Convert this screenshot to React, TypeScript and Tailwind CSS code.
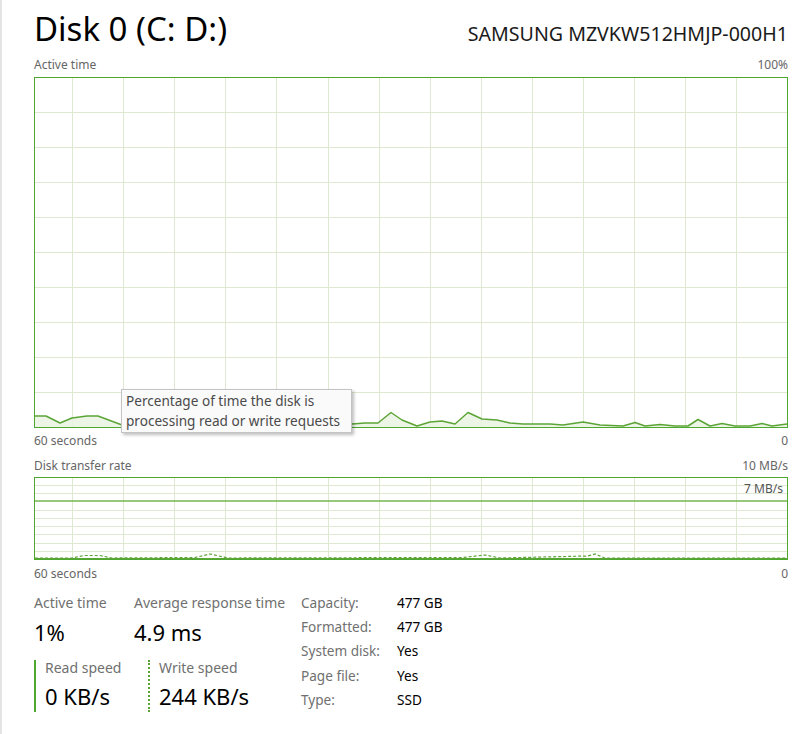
const GRID = '#dfe8d0';
const LINE = '#5ba537';

const vLines = Array.from({ length: 14 }, (_, k) => Math.round(37 + 51.1 * k) + 0.5);

const activePts: [number, number][] = [
  [35, 416], [46, 416], [60, 423], [72, 418], [87, 416], [98, 416], [122, 425], [140, 426],
  [160, 424], [180, 425], [200, 425], [220, 424], [240, 425], [260, 424], [280, 425], [300, 425],
  [320, 424], [340, 425], [352, 424], [365, 423], [378, 423], [391, 412.5], [402, 420], [417, 426],
  [430, 422], [442, 421], [455, 424], [468, 412.5], [482, 419], [497, 420], [510, 423], [523, 424],
  [550, 424], [563, 425], [583, 422], [600, 425], [623, 426], [635, 422.5], [645, 426], [660, 424.5],
  [675, 426], [688, 426], [698, 419.5], [710, 426], [722, 423.5], [735, 426], [750, 426], [762, 423.5],
  [772, 426], [787, 424],
];

const writePts: [number, number][] = [
  [35, 558], [72, 558], [84, 555.5], [100, 555.5], [112, 558], [195, 557.5], [210, 554], [228, 558],
  [463, 557.5], [485, 555], [500, 558], [588, 556], [595, 554], [605, 558], [787, 558],
];

function toPath(pts: [number, number][], ox: number, oy: number) {
  return pts.map(([x, y], i) => `${i ? 'L' : 'M'}${x - ox} ${y - oy}`).join(' ');
}

function ActiveChart() {
  const h = 349;
  const line = toPath(activePts, 35, 78);
  return (
    <svg width={752} height={h} className="block">
      {vLines.map((x) => (
        <line key={x} x1={x} x2={x} y1={0} y2={h} stroke={GRID} strokeWidth={1} />
      ))}
      {Array.from({ length: 9 }, (_, k) => 34.5 + 35 * k).map((y) => (
        <line key={y} x1={0} x2={752} y1={y} y2={y} stroke={GRID} strokeWidth={1} />
      ))}
      <path d={`${line} L752 ${h} L0 ${h} Z`} fill="#e8f3e0" opacity={0.8} />
      <path d={line} fill="none" stroke={LINE} strokeWidth={1.5} strokeLinejoin="round" />
    </svg>
  );
}

function TransferChart() {
  const h = 81;
  return (
    <svg width={752} height={h} className="block">
      {vLines.map((x) => (
        <line key={x} x1={x} x2={x} y1={0} y2={h} stroke={GRID} strokeWidth={1} />
      ))}
      {Array.from({ length: 9 }, (_, k) => Math.round(8.2 * (k + 1) - 1) + 0.5).map((y, k) =>
        k === 2 ? null : <line key={y} x1={0} x2={752} y1={y} y2={y} stroke={GRID} strokeWidth={1} />
      )}
      <line x1={0} x2={752} y1={23} y2={23} stroke="#74b44f" strokeWidth={1.5} />
      <path d={toPath(writePts, 35, 478)} fill="none" stroke={LINE} strokeWidth={1.2} strokeDasharray="3 2" />
      <line x1={0} x2={752} y1={80.5} y2={80.5} stroke={LINE} strokeWidth={1} />
    </svg>
  );
}

export default function App() {
  return (
    <div className="w-[800px] h-[734px] overflow-hidden bg-white border-l-2 border-[#e4e4e4] pl-8 pr-3 flex flex-col font-['Noto_Sans','Open_Sans',sans-serif] text-black">
      {/* Header */}
      <div className="flex items-baseline justify-between pt-[9px]">
        <span className="text-[33px] leading-[40px] text-black">Disk 0 (C: D:)</span>
        <span className="text-[19.6px] leading-[28px] text-[#1a1a1a]">SAMSUNG MZVKW512HMJP-000H1</span>
      </div>

      {/* Active time chart */}
      <div className="mt-[8px] flex justify-between text-[12px] leading-4 text-[#666]">
        <span>Active time</span>
        <span>100%</span>
      </div>
      <div className="relative mt-[4px] h-[351px] border border-[#4ea72e]">
        <ActiveChart />
        <div className="absolute left-[86px] top-[311px] w-[231px] h-[44px] bg-[#fafafa] border border-[#c4c4c4] pl-[4px] pt-[1px] shadow-[2px_2px_3px_rgba(0,0,0,0.25)] text-[13.6px] leading-5 text-[#4a4a4a] whitespace-nowrap">
          <div>Percentage of time the disk is</div>
          <div>processing read or write requests</div>
        </div>
      </div>
      <div className="mt-[5px] flex justify-between text-[12px] leading-4 text-[#666]">
        <span>60 seconds</span>
        <span>0</span>
      </div>

      {/* Transfer rate chart */}
      <div className="mt-[9px] flex justify-between text-[12px] leading-4 text-[#666]">
        <span>Disk transfer rate</span>
        <span>10 MB/s</span>
      </div>
      <div className="relative mt-[3px] h-[83px] border border-[#4ea72e]">
        <TransferChart />
        <span className="absolute right-[4px] top-[3px] text-[12px] leading-4 text-[#555]">7 MB/s</span>
      </div>
      <div className="mt-[6px] flex justify-between text-[12px] leading-4 text-[#666]">
        <span>60 seconds</span>
        <span>0</span>
      </div>

      {/* Stats */}
      <div className="mt-[9px] flex">
        <div className="w-[267px] pt-[2px] flex flex-col">
          <div className="flex">
            <div className="w-[100px] flex flex-col">
              <span className="text-[14px] leading-5 text-[#707070]">Active time</span>
              <span className="mt-[5px] text-[22px] leading-7">1%</span>
            </div>
            <div className="flex flex-col">
              <span className="text-[14px] leading-5 text-[#707070] whitespace-nowrap">Average response time</span>
              <span className="mt-[5px] text-[22px] leading-7">4.9 ms</span>
            </div>
          </div>
          <div className="mt-[14px] flex">
            <div className="w-[114px] border-l-2 border-[#4ea72e] pl-[9px] pb-[2px] flex flex-col">
              <span className="text-[14px] leading-4 text-[#707070]">Read speed</span>
              <span className="mt-[6px] text-[22px] leading-7 whitespace-nowrap">0 KB/s</span>
            </div>
            <div className="border-l-2 border-dotted border-[#5ba537] pl-[9px] pb-[2px] flex flex-col">
              <span className="text-[14px] leading-4 text-[#707070]">Write speed</span>
              <span className="mt-[6px] text-[22px] leading-7 whitespace-nowrap">244 KB/s</span>
            </div>
          </div>
        </div>
        <div className="grid grid-cols-[96px_auto] text-[13.6px] leading-6">
          <span className="text-[#707070]">Capacity:</span>
          <span>477 GB</span>
          <span className="text-[#707070]">Formatted:</span>
          <span>477 GB</span>
          <span className="text-[#707070]">System disk:</span>
          <span>Yes</span>
          <span className="text-[#707070]">Page file:</span>
          <span>Yes</span>
          <span className="text-[#707070]">Type:</span>
          <span>SSD</span>
        </div>
      </div>
    </div>
  );
}
